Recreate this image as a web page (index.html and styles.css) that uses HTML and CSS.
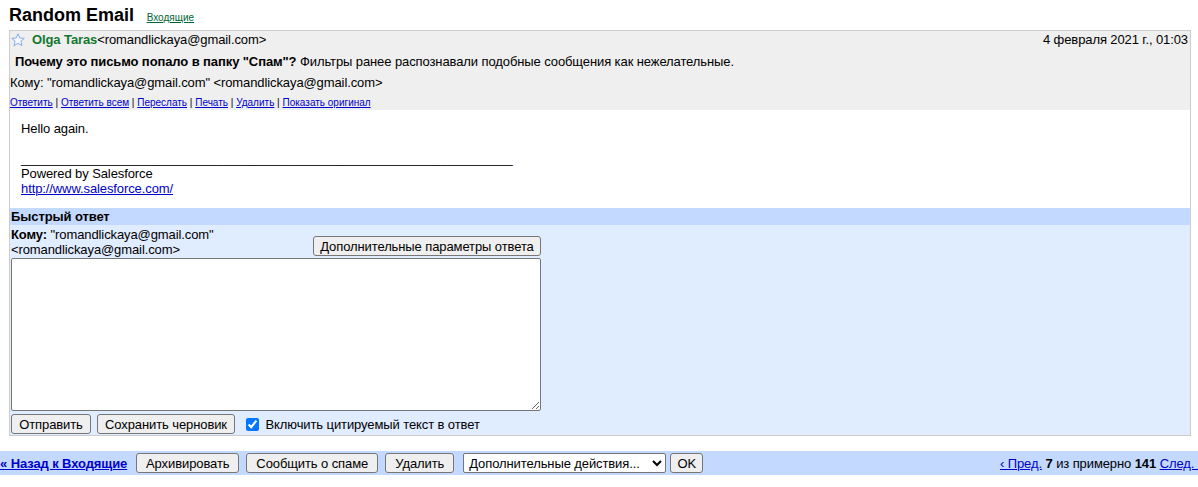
FILE: index.html
```html
<!DOCTYPE html>
<html lang="ru">
<head>
<meta charset="utf-8">
<title>Random Email</title>
<link rel="stylesheet" href="styles.css">
</head>
<body>
<div class="title-row">
  <span class="title">Random Email</span>
  <a class="folder-link" href="#">Входящие</a>
</div>
<div class="msg-box">
  <div class="hdr">
    <div class="row1">
      <div class="sender">
        <svg class="star" width="14" height="14" viewBox="0 0 14 14"><polygon points="7,0.8 8.8,5 13.3,5.3 9.9,8.2 11,12.7 7,10.3 3,12.7 4.1,8.2 0.7,5.3 5.2,5" fill="#f6f9ff" stroke="#86aee6" stroke-width="1" stroke-linejoin="round"/></svg>
        <b class="name">Olga Taras</b><span>&lt;romandlickaya@gmail.com&gt;</span>
      </div>
      <div class="date">4 февраля 2021 г., 01:03</div>
    </div>
    <div class="row2"><b>Почему это письмо попало в папку "Спам"?</b> Фильтры ранее распознавали подобные сообщения как нежелательные.</div>
    <div class="row3">Кому: "romandlickaya@gmail.com" &lt;romandlickaya@gmail.com&gt;</div>
    <div class="row4"><a href="#">Ответить</a> | <a href="#">Ответить всем</a> | <a href="#">Переслать</a> | <a href="#">Печать</a> | <a href="#">Удалить</a> | <a href="#">Показать оригинал</a></div>
  </div>
  <div class="body">
    <div>Hello again.</div>
    <div>&nbsp;</div>
    <div class="rule">____________________________________________________________________</div>
    <div>Powered by Salesforce</div>
    <div><a href="#">http://www.salesforce.com/</a></div>
  </div>
  <div class="qr-head">Быстрый ответ</div>
  <div class="qr">
    <div class="qr-top">
      <div class="qr-to"><b>Кому:</b> "romandlickaya@gmail.com" &lt;romandlickaya@gmail.com&gt;</div>
      <button class="btn b-opts">Дополнительные параметры ответа</button>
    </div>
    <textarea class="qr-text"></textarea>
    <div class="qr-actions">
      <button class="btn b-send">Отправить</button>
      <button class="btn b-draft">Сохранить черновик</button>
      <label class="quote"><input type="checkbox" checked> Включить цитируемый текст в ответ</label>
    </div>
  </div>
</div>
<div class="bar">
  <a class="back" href="#">« Назад к Входящие</a>
  <button class="btn b-arch">Архивировать</button>
  <button class="btn b-spam">Сообщить о спаме</button>
  <button class="btn b-del">Удалить</button>
  <select class="more"><option>Дополнительные действия...</option></select>
  <button class="btn b-ok">OK</button>
  <div class="nav"><a href="#">‹ Пред.</a> <b>7</b> из примерно <b>141</b> <a href="#">След. ›</a></div>
</div>
</body>
</html>
```
FILE: styles.css
```css
html, body {
  margin: 0;
  padding: 0;
  overflow: hidden;
  background: #fff;
}
body {
  font-family: "Liberation Sans", Arial, sans-serif;
  font-size: 13px;
  color: #000;
  width: 1198px;
  letter-spacing: -0.1px;
}
a { color: #0000cc; }

.title-row {
  height: 30px;
  padding-left: 9px;
  line-height: 30px;
  letter-spacing: 0;
}
.title {
  font-size: 18px;
  font-weight: bold;
}
.folder-link {
  font-size: 10px;
  color: #006633;
  margin-left: 9px;
}

.msg-box {
  margin: 0 7px 0 9px;
  border: 1px solid #ccc;
}
.hdr {
  background: #efefef;
  padding: 1px 1px 1px 0;
}
.row1 {
  display: flex;
  justify-content: space-between;
  line-height: 16px;
}
.sender {
  display: flex;
  align-items: center;
}
.star {
  margin: 0 7px 0 1px;
}
.name { color: #11782f; }
.date { padding-right: 1px; }
.row2 {
  margin-top: 6px;
  padding-left: 5px;
  line-height: 16px;
}
.row3 {
  margin-top: 5px;
  line-height: 16px;
}
.row4 {
  margin-top: 6px;
  font-size: 10px;
  line-height: 12px;
  letter-spacing: 0;
}

.body {
  background: #fff;
  padding: 11px 11px 12px;
  line-height: 15px;
}
.rule { letter-spacing: 0; }

.qr-head {
  background: #c3d9ff;
  font-weight: bold;
  line-height: 15px;
  padding: 1px;
}
.qr {
  background: #e0ecff;
  padding: 2px 0 0 1px;
}
.qr-top {
  width: 530px;
  display: flex;
  align-items: flex-end;
  justify-content: space-between;
}
.qr-to {
  line-height: 15px;
  padding-bottom: 1px;
}
.btn {
  font-family: "Liberation Sans", Arial, sans-serif;
  font-size: 13px;
  letter-spacing: -0.1px;
  height: 20px;
  padding: 0;
  background: #efefef;
  border: 1px solid #767676;
  border-radius: 3px;
  color: #000;
  flex: none;
  margin: 0;
}
.b-opts {
  width: 228px;
  margin-bottom: 2px;
}
.b-send { width: 80px; }
.b-draft { width: 138px; }
.qr-text {
  display: block;
  width: 530px;
  height: 153px;
  box-sizing: border-box;
  margin: 0;
  border: 1px solid #767676;
  border-radius: 2px;
  background: #fff;
}
.qr-actions {
  display: flex;
  align-items: center;
  gap: 6px;
  margin-top: 3px;
  padding-bottom: 1px;
}
.quote {
  display: flex;
  align-items: center;
  white-space: pre;
}
.quote input {
  margin: 0 3px 0 5px;
  width: 13px;
  height: 13px;
}

.bar {
  margin-top: 15px;
  height: 24px;
  background: #c3d9ff;
  display: flex;
  align-items: center;
  margin-right: -4px;
  white-space: nowrap;
}
.back {
  font-weight: bold;
  margin-right: 9px;
}
.b-spam, .b-del { margin-left: 7px; }
.b-arch { width: 103px; }
.b-spam { width: 132px; }
.b-del { width: 69px; }
.more {
  margin-left: 9px;
  width: 203px;
  height: 20px;
  font-family: "Liberation Sans", Arial, sans-serif;
  font-size: 13px;
  letter-spacing: -0.1px;
  border: 1px solid #767676;
  border-radius: 2px;
  background: #fff;
  padding: 0 0 0 1px;
}
.b-ok {
  margin-left: 4px;
  width: 33px;
}
.nav {
  margin-left: auto;
}
```
